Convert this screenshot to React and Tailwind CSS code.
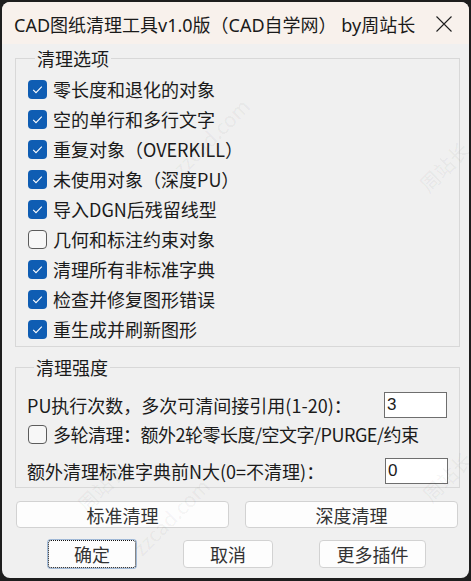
const body = "font-['Noto_Sans_CJK_SC',sans-serif] text-[18px] text-[#1b1b1b]";

function Check({ on }) {
  return on ? (
    <span className="flex w-[19px] h-[19px] shrink-0 items-center justify-center rounded-[4px] bg-[#0f5db3]">
      <svg width="19" height="19" viewBox="0 0 19 19">
        <path d="M5.2 9.8 L8 12.6 L13.8 6.6" fill="none" stroke="white" strokeWidth="1.1" />
      </svg>
    </span>
  ) : (
    <span className="block w-[19px] h-[19px] shrink-0 rounded-[4px] border border-[#5c5c5c] bg-[#f7f7f7]" />
  );
}

const options = [
  ["零长度和退化的对象", true],
  ["空的单行和多行文字", true],
  ["重复对象（OVERKILL）", true],
  ["未使用对象（深度PU）", true],
  ["导入DGN后残留线型", true],
  ["几何和标注约束对象", false],
  ["清理所有非标准字典", true],
  ["检查并修复图形错误", true],
  ["重生成并刷新图形", true],
];

function Watermark({ className, text }) {
  return (
    <span
      className={`pointer-events-none absolute -rotate-45 whitespace-nowrap text-[20px] text-black/[0.05] font-['Noto_Sans_CJK_SC',sans-serif] ${className}`}
    >
      {text}
    </span>
  );
}

export default function App() {
  return (
    <div className="w-[471px] h-[581px] bg-[#1e1e1e] p-[2px] pb-[3px]">
      <div className="relative flex h-full flex-col overflow-hidden rounded-lg bg-[#f0f0f0]">
        {/* Title bar */}
        <div className="flex h-[42px] items-start bg-[#f8f1ec] pl-[12px] pr-[17px] pt-[11px]">
          <span className="text-[18px] leading-[24px] text-[#1a1a1a] font-['Noto_Sans','Noto_Sans_CJK_SC',sans-serif]">
            CAD图纸清理工具v1.0版（CAD自学网） by周站长
          </span>
          <svg className="ml-auto mt-[3px]" width="16" height="16" viewBox="0 0 16 16">
            <path d="M0.5 0.5 L15.5 15.5 M15.5 0.5 L0.5 15.5" stroke="#1f1f1f" strokeWidth="1.1" />
          </svg>
        </div>

        <div className={`flex flex-col pl-[13px] pr-[9px] pt-[4px] ${body}`}>
          {/* 清理选项 */}
          <fieldset className="border border-[#d8d8d8] pl-[12px] pt-[6px] pb-[2px]">
            <legend className="ml-[7px] px-[2px] leading-[20px]">清理选项</legend>
            {options.map(([label, on]) => (
              <div key={label} className="flex h-[30px] items-center gap-[6px]">
                <Check on={on} />
                <span className="leading-[22px]">{label}</span>
              </div>
            ))}
          </fieldset>

          {/* 清理强度 */}
          <fieldset className="mt-[10px] border border-[#d8d8d8] pl-[11px] pr-[12px] pt-[15px] pb-[3px]">
            <legend className="ml-[7px] px-[2px] leading-[20px]">清理强度</legend>
            <div className="flex h-[26px] items-center">
              <span>PU执行次数，多次可清间接引用(1-20)：</span>
              <div className="ml-auto flex h-[26px] w-[63px] items-center border border-[#6e6e6e] bg-white pl-[2px] text-[17px] font-['Liberation_Sans',sans-serif]">
                3
              </div>
            </div>
            <div className="mt-[7px] flex h-[19px] items-center gap-[6px] pl-[1px]">
              <Check on={false} />
              <span className="whitespace-nowrap tracking-[-0.5px]">多轮清理：额外2轮零长度/空文字/PURGE/约束</span>
            </div>
            <div className="mt-[14px] flex h-[26px] items-center">
              <span>额外清理标准字典前N大(0=不清理)：</span>
              <div className="ml-auto mr-[-1px] flex h-[26px] w-[63px] items-center border border-[#6e6e6e] bg-white pl-[2px] text-[17px] font-['Liberation_Sans',sans-serif]">
                0
              </div>
            </div>
          </fieldset>

          {/* Clean buttons */}
          <div className="mt-[13px] ml-[1px] flex gap-[16px]">
            <button className="h-[27px] w-[213px] rounded-[4px] border border-[#d2d2d2] bg-[#fdfdfd] leading-none text-[#333]">
              标准清理
            </button>
            <button className="h-[27px] w-[213px] rounded-[4px] border border-[#d2d2d2] bg-[#fdfdfd] leading-none text-[#333]">
              深度清理
            </button>
          </div>

          {/* Dialog buttons */}
          <div className="mt-[12px] flex">
            <button className="ml-[33px] h-[28px] w-[88px] rounded-[3px] border border-dotted border-[#111] bg-[#fdfdfd] leading-none text-[#333] shadow-[0_0_0_1px_#9fb8d6]">
              确定
            </button>
            <button className="ml-[47px] h-[28px] w-[90px] rounded-[4px] border border-[#d2d2d2] bg-[#fdfdfd] leading-none text-[#333]">
              取消
            </button>
            <button className="ml-[46px] h-[28px] w-[107px] rounded-[4px] border border-[#d2d2d2] bg-[#fdfdfd] leading-none text-[#333]">
              更多插件
            </button>
          </div>
        </div>

        <Watermark className="left-[412px] top-[150px]" text="周站长" />
        <Watermark className="left-[160px] top-[120px]" text="zzcad.com" />
        <Watermark className="left-[70px] top-[470px]" text="周站长" />
        <Watermark className="left-[120px] top-[500px]" text="zzcad.com" />
        <Watermark className="left-[415px] top-[460px]" text="周站长" />
      </div>
    </div>
  );
}
